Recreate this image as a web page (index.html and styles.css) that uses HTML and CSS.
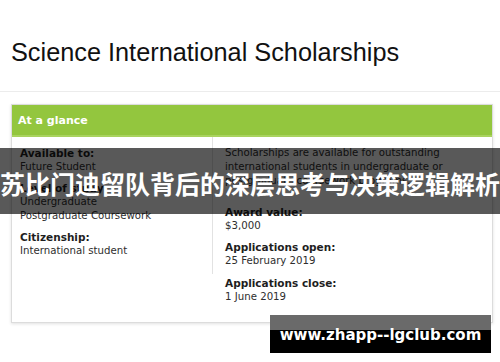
FILE: index.html
```html
<!DOCTYPE html>
<html>
<head>
<meta charset="utf-8">
<link rel="stylesheet" href="styles.css">
</head>
<body>
<div class="page">
  <header class="top">
    <h1 class="title">Science International Scholarships</h1>
  </header>
  <section class="card">
    <div class="card-head">At a glance</div>
    <div class="card-body">
      <div class="col-left">
        <div class="group">
          <div class="label">Available to:</div>
          <div class="value">Future Student</div>
        </div>
        <div class="group">
          <div class="label">Level of study:</div>
          <div class="value">Undergraduate</div>
          <div class="value">Postgraduate Coursework</div>
        </div>
        <div class="group">
          <div class="label">Citizenship:</div>
          <div class="value">International student</div>
        </div>
      </div>
      <div class="col-right">
        <p class="intro">Scholarships are available for outstanding international students in undergraduate or postgraduate coursework programs.</p>
        <div class="group">
          <div class="label">Award value:</div>
          <div class="value">$3,000</div>
        </div>
        <div class="group">
          <div class="label">Applications open:</div>
          <div class="value">25 February 2019</div>
        </div>
        <div class="group">
          <div class="label">Applications close:</div>
          <div class="value">1 June 2019</div>
        </div>
      </div>
    </div>
  </section>
  <div class="banner">苏比门迪留队背后的深层思考与决策逻辑解析</div>
  <div class="mark">www.zhapp--lgclub.com</div>
</div>
</body>
</html>
```

FILE: styles.css
```css
html, body {
  margin: 0;
  padding: 0;
  background: #fff;
}
.page {
  position: relative;
  width: 500px;
  height: 362px;
  overflow: hidden;
}
.top {
  height: 91px;
  border-bottom: 1px solid #ececec;
  box-sizing: content-box;
}
.title {
  margin: 0;
  padding: 38px 0 0 11px;
  font-family: "Liberation Sans", Arial, sans-serif;
  font-weight: normal;
  font-size: 25.3px;
  line-height: 29px;
  color: #111;
}
.card {
  margin: 12px 7px 0 11px;
  border: 1px solid #dcdcdc;
  box-shadow: 0 1px 3px rgba(0,0,0,0.12);
  background: #fff;
  font-family: Verdana, "DejaVu Sans", sans-serif;
}
.card-head {
  height: 30px;
  background: #93c63e;
  border-bottom: 2px solid #a9d35e;
  color: #fff;
  font-weight: bold;
  font-size: 11px;
  line-height: 32px;
  padding-left: 6px;
}
.card-body {
  display: flex;
  align-items: flex-start;
  padding-bottom: 11px;
}
.col-left {
  width: 192px;
  padding: 9px 0 9px 8px;
  border-right: 1px solid #e2e2e2;
}
.col-right {
  flex: 1;
  padding: 9px 12px 0 12px;
}
.group {
  margin-bottom: 7px;
}
.col-right .group:nth-of-type(2) {
  margin-bottom: 8px;
}
.label {
  font-weight: bold;
  font-size: 10.5px;
  line-height: 14px;
  color: #1e1e1e;
}
.value, .intro {
  font-size: 10.2px;
  line-height: 14px;
  color: #2e2e2e;
}
.intro {
  margin: 0 0 17px 0;
}
.banner {
  position: absolute;
  left: 0;
  top: 148px;
  width: 500px;
  height: 66px;
  background: rgba(0,0,0,0.65);
  color: #fff;
  font-family: "Noto Sans CJK SC", sans-serif;
  font-weight: bold;
  font-size: 25px;
  line-height: 70px;
  text-align: center;
  white-space: nowrap;
}
.mark {
  position: absolute;
  left: 270px;
  top: 315px;
  width: 221px;
  height: 38px;
  background: linear-gradient(#6a6a6a 0, #6a6a6a 15px, #000 15px);
  color: #fff;
  font-family: "DejaVu Sans", Verdana, sans-serif;
  font-weight: bold;
  font-size: 15px;
  line-height: 40px;
  text-align: center;
  white-space: nowrap;
}
```
